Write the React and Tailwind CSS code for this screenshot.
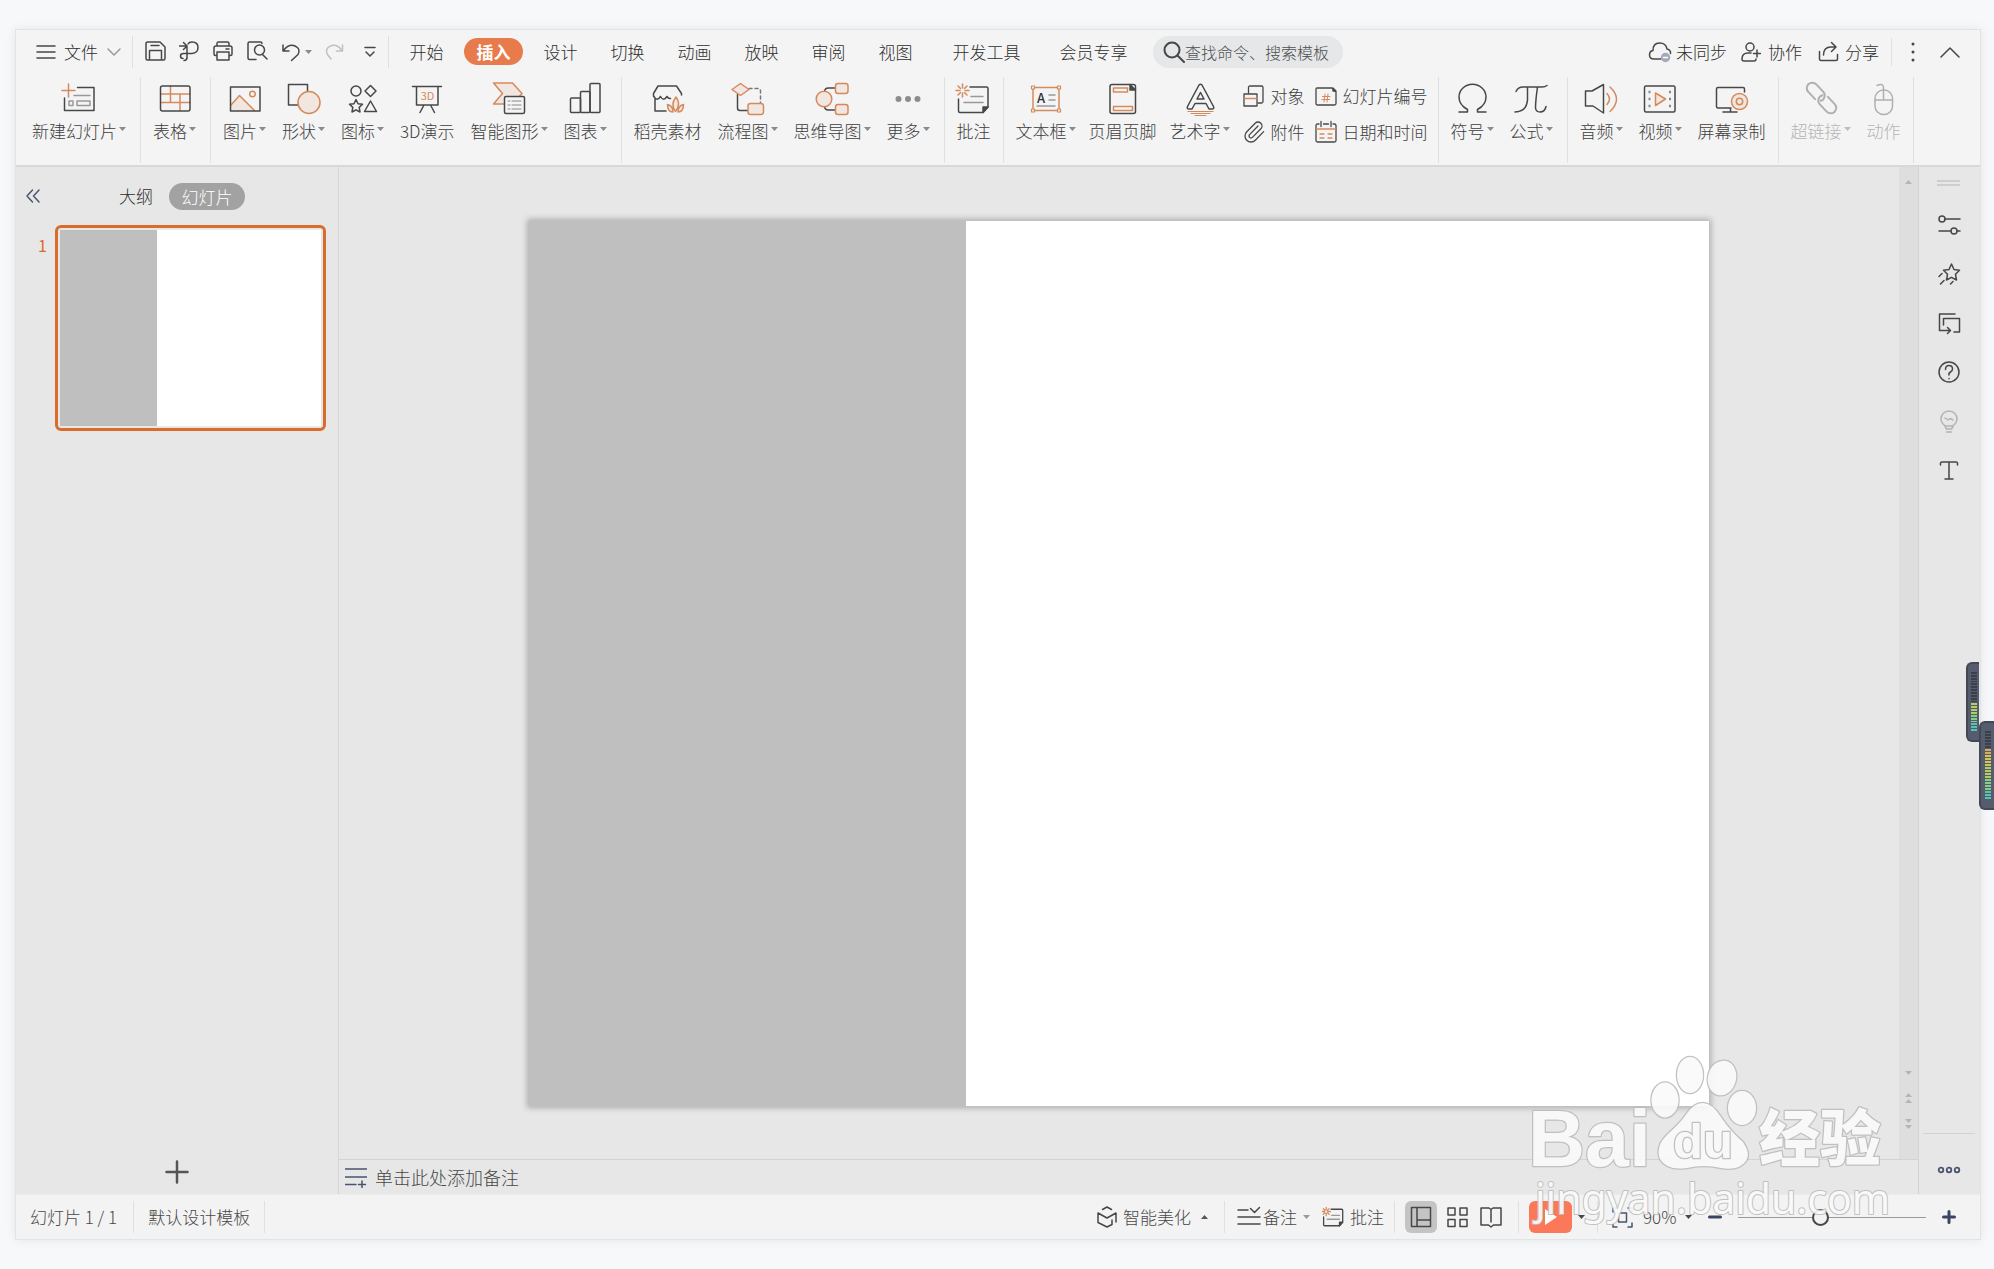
import React, { useState } from 'react';

const INK = '#474747';
const ORANGE = '#d58a5c';
const TINT = '#f1e6e0';

const icons = {
  newSlide: (
    <>
      <path d="M15.500 6.500H32V29.500H2.500V17" />
      <path d="M6.500 3v13M0 9.500h13" stroke={ORANGE} />
      <path d="M12 14.500h16" stroke="#999" />
      <path d="M7 20h4v4.500H7zM15 20h13v4.500H15z" stroke="#999" />
    </>
  ),
  table: (
    <>
      <path d="M3 13h29M3 21.500h29M12.500 5v16.500M22 13v16.500" stroke={ORANGE} />
      <rect x="2.500" y="5" width="29.500" height="25" rx="2" />
    </>
  ),
  picture: (
    <>
      <path d="M3 24L11.500 14.500L26.500 29.500H3z" fill={TINT} stroke="none" />
      <path d="M3 24L11.500 14.500L26.500 29.500" stroke={ORANGE} />
      <circle cx="24.500" cy="13" r="2.800" stroke={ORANGE} />
      <rect x="2.500" y="6" width="29.500" height="24" />
    </>
  ),
  shapes: (
    <>
      <rect x="1.500" y="3.500" width="19" height="20.500" />
      <circle cx="22" cy="21.500" r="11" fill={TINT} stroke={ORANGE} />
    </>
  ),
  iconSet: (
    <>
      <circle cx="10" cy="10" r="5" />
      <path d="M24.500 4.500L30 10l-5.500 5.500L19 10z" />
      <path d="M10 18.500l2 4.200 4.500.6-3.300 3.100.8 4.600-4-2.200-4 2.200.8-4.600-3.300-3.100 4.500-.6z" />
      <path d="M24.500 20L30.500 30.500h-12z" />
    </>
  ),
  show3d: (
    <>
      <path d="M2.500 5.500h29M6.500 5.500V24h21.500V5.500M14 24l-4 7.500M20.500 24l4 7.500" />
      <text x="17.500" y="19" textAnchor="middle" fontSize="11" fontWeight="400" fill={ORANGE} stroke="none">3D</text>
    </>
  ),
  smartArt: (
    <>
      <path d="M1.500 2H20.500L30 12.500L20.500 23H1.500L10.500 12.500z" fill={TINT} stroke={ORANGE} />
      <rect x="12.500" y="15.500" width="20" height="17" rx="1.500" fill="#f4f4f4" />
      <path d="M16 20h2M20 20h9M16 24h2M20 24h9M16 28h2M20 28h9" stroke="#888" strokeWidth="1" />
    </>
  ),
  chart: (
    <>
      <rect x="2.500" y="17" width="10" height="14.500" rx="1" />
      <rect x="12.500" y="10.500" width="9.500" height="21" rx="1" />
      <rect x="22" y="2.500" width="10" height="29" rx="1" />
    </>
  ),
  store: (
    <>
      <path d="M30.500 14V12.500L25.500 5H7L2.500 12.500V15Q6 21 9.500 15.500Q12.500 21 16 15.500Q17.500 18 19.500 17.500M4 18V30h11" />
      <path d="M24.500 30.500c-4-5-3-10 .5-14.500c3.500 4.500 3.500 9.500-.5 14.500zM22 31c-4 0-5.500-3-5.500-7.500c4 1 5.500 3.500 5.500 7.500zM27 31c4 0 5.500-3 5.500-7.500c-4 1-5.500 3.500-5.500 7.500z" stroke={ORANGE} fill={TINT} />
    </>
  ),
  flow: (
    <>
      <path d="M6.500 13.500V27q0 2.500 2.500 2.500h8" />
      <path d="M18 7.500h9q2.500 0 2.500 2.500v12" strokeDasharray="3 3" stroke="#777" />
      <path d="M9.500 2.500l8.500 6-8.500 6-8.500-6z" fill={TINT} stroke={ORANGE} />
      <rect x="17" y="22.500" width="15.500" height="11" rx="2.500" fill={TINT} stroke={ORANGE} />
    </>
  ),
  mind: (
    <>
      <path d="M9.500 11q0-4 4-4H21M9.500 25q0 4 4 4H21" />
      <circle cx="9" cy="18" r="7.800" fill={TINT} stroke={ORANGE} />
      <rect x="20.500" y="2.500" width="12.500" height="10" rx="2.500" fill={TINT} stroke={ORANGE} />
      <rect x="20.500" y="23.500" width="12.500" height="10" rx="2.500" fill={TINT} stroke={ORANGE} />
    </>
  ),
  more: (
    <g fill="#8c8c8c" stroke="none">
      <circle cx="7.500" cy="18" r="3" />
      <circle cx="17" cy="18" r="3" />
      <circle cx="26.500" cy="18" r="3" />
    </g>
  ),
  comment: (
    <>
      <path d="M13 6H29.500q1.500 0 1.500 1.500V26l-5 5.500H3q-1.500 0-1.500-1.500V18" />
      <path d="M31 26h-5v5.500z" fill={INK} />
      <path d="M14 15.500h12M7 21.500h19" stroke="#999" />
      <path d="M5.500 3v4M5.500 12v4M-1 9.500h4M8 9.500h4M1 5l2.500 2.500M7.500 11.500L10 14M10 5L7.500 7.500M3.500 11.500L1 14" stroke={ORANGE} />
    </>
  ),
  textBox: (
    <>
      <rect x="4" y="6.500" width="26" height="23" stroke={ORANGE} />
      <path d="M2.500 5h3v3h-3zM28.500 5h3v3h-3zM2.500 28h3v3h-3zM28.500 28h3v3h-3z" fill="#f4f4f4" stroke={ORANGE} strokeWidth="1.200" />
      <text x="12" y="21.500" textAnchor="middle" fontSize="13" fontWeight="500" fill="#333" stroke="none">A</text>
      <path d="M20 14h6M20 19h6M8 25h18" stroke="#999" />
    </>
  ),
  headerFooter: (
    <>
      <rect x="4" y="3.500" width="25.500" height="29" rx="2" />
      <path d="M24 3.500l5.500 5.500h-5.500z" fill={INK} />
      <path d="M7.500 7h14v4h-14zM7.500 25.500h19v4h-19z" stroke={ORANGE} />
    </>
  ),
  wordArt: (
    <>
      <path d="M16 4q1.500-1.500 3 0L30.500 25.500q1 2.500-1.500 2.500h-3l-3-5.500H12L9 28H6q-2.500 0-1.500-2.500z" />
      <path d="M17.500 11.500l-3.500 6.500h7z" />
      <path d="M5 30.500h25M8 32.500h19M12 34.500h11" stroke={ORANGE} strokeWidth="1.200" />
    </>
  ),
  omega: <path d="M4 31H12.500V28.500C7 25.500 4 21.500 4 16A13.500 12.800 0 0 1 31 16C31 21.500 28 25.500 22.500 28.500V31H31" />,
  pi: <path d="M2 10.500Q4 6 9 6H28Q31 6 33 4.500M13.500 6V19Q12.500 31 1 31M23.500 6Q21.500 20 21.500 27Q22 31 26 31Q31 31 32 25.500" />,
  audio: (
    <>
      <path d="M1.500 10H8L19.500 3.500V32L9 25H1.500z" />
      <path d="M23 12.500q5 5.500 0 11M26 6q13 12 0 24.500" stroke={ORANGE} />
    </>
  ),
  video: (
    <>
      <rect x="1.500" y="5" width="30.500" height="26" rx="1.500" />
      <path d="M5.500 11h2M5.500 18h2M5.500 25h2M26 11h2M26 18h2M26 25h2" strokeLinecap="butt" strokeWidth="2.500" stroke="#888" />
      <path d="M12.500 12l10 6-10 6.500z" fill={TINT} stroke={ORANGE} />
    </>
  ),
  record: (
    <>
      <path d="M16 27H3q-1.500 0-1.500-1.500V8q0-1.500 1.500-1.500H28q1.500 0 1.500 1.500v3M15.500 27v4M8 31h14" />
      <circle cx="24.500" cy="20.500" r="8" fill={TINT} stroke={ORANGE} />
      <circle cx="24.500" cy="20.500" r="3.200" stroke={ORANGE} />
    </>
  ),
  link: (
    <g transform="rotate(47 17.500 17)" stroke="#b0b0b0" strokeWidth="2">
      <path d="M14 22.500H4a5.500 5.500 0 0 1 0-11H14a5.500 5.500 0 0 1 5 8" />
      <path d="M21 11.500H31a5.500 5.500 0 0 1 0 11H21a5.500 5.500 0 0 1-5-8" />
    </g>
  ),
  mouse: (
    <g stroke="#b0b0b0">
      <rect x="8" y="9" width="17.500" height="24.500" rx="8.500" />
      <path d="M8 19h17.500M16.500 19V7q0-4-3-3.500T10 4.500" />
    </g>
  ),
};

const groups = [
  { items: [{ icon: 'newSlide', label: '新建幻灯片', menu: true }] },
  { items: [{ icon: 'table', label: '表格', menu: true }] },
  {
    items: [
      { icon: 'picture', label: '图片', menu: true },
      { icon: 'shapes', label: '形状', menu: true },
      { icon: 'iconSet', label: '图标', menu: true },
      { icon: 'show3d', label: '3D演示' },
      { icon: 'smartArt', label: '智能图形', menu: true },
      { icon: 'chart', label: '图表', menu: true },
    ],
  },
  {
    items: [
      { icon: 'store', label: '稻壳素材' },
      { icon: 'flow', label: '流程图', menu: true },
      { icon: 'mind', label: '思维导图', menu: true },
      { icon: 'more', label: '更多', menu: true },
    ],
  },
  { items: [{ icon: 'comment', label: '批注' }] },
  {
    items: [
      { icon: 'textBox', label: '文本框', menu: true },
      { icon: 'headerFooter', label: '页眉页脚' },
      { icon: 'wordArt', label: '艺术字', menu: true },
    ],
    small: true,
  },
  {
    items: [
      { icon: 'omega', label: '符号', menu: true },
      { icon: 'pi', label: '公式', menu: true },
    ],
  },
  {
    items: [
      { icon: 'audio', label: '音频', menu: true },
      { icon: 'video', label: '视频', menu: true },
      { icon: 'record', label: '屏幕录制' },
    ],
  },
  {
    items: [
      { icon: 'link', label: '超链接', menu: true, disabled: true },
      { icon: 'mouse', label: '动作', disabled: true },
    ],
  },
];

const smallTools = [
  {
    label: '对象',
    art: (
      <>
        <path d="M5.500 8V2.500Q5.500 1 7 1H18.500Q20 1 20 2.500V16.500Q20 18 18.500 18H15" />
        <rect x="1" y="9" width="13" height="12" />
        <path d="M1 13.500h13" stroke={ORANGE} />
      </>
    ),
  },
  {
    label: '幻灯片编号',
    art: (
      <>
        <path d="M2 3H17l4 4V18.500Q21 20 19.500 20H2.500Q1 20 1 18.500V4Q1 3 2 3z" />
        <path d="M18 3l3 3h-3z" fill={INK} />
        <path d="M10 9l-1 8M13 9l-1 8M7.500 11.500h7.500M7 14.500h7.500" stroke={ORANGE} strokeWidth="1" />
      </>
    ),
  },
  {
    label: '附件',
    art: (
      <path
        transform="translate(-1 -1)"
        d="m16 6-8.414 8.586a2 2 0 0 0 2.829 2.829l8.414-8.586a4 4 0 1 0-5.657-5.657l-8.379 8.551a6 6 0 1 0 8.485 8.485l8.379-8.551"
      />
    ),
  },
  {
    label: '日期和时间',
    art: (
      <>
        <path d="M4 3H2.500Q1 3 1 4.500V19.500Q1 21 2.500 21H19.500Q21 21 21 19.500V4.500Q21 3 19.500 3H18M8.500 3h5M6 .5v5M16 .5v5" />
        <path d="M1.500 8h19M5 13h4M13 13h4M5 17h4M13 17h4" stroke={ORANGE} />
      </>
    ),
  },
];

const quickTools = [
  { label: '保存', art: <path d="M3 1H15l5 5V17.500Q20 19 18.500 19H2.500Q1 19 1 17.500V2.500Q1 1 3 1zM6 4.500h8M4.500 19V9.500H16.500V19" /> },
  { label: '输出', art: <path d="M0 5h7M4.500 1.500L8 5 4.500 8.500M9 3q1-2 4-2 6 0 6 5.500T13 12.500H4.500Q1.500 12.500 1.500 15T4 17.500M8 5V16.500Q8 19.500 5 19.500" /> },
  { label: '打印', art: <path d="M4 5V2.500Q4 1 5.500 1H14.500Q16 1 16 2.500V5M4 14.500H2.500Q1 14.500 1 13V7Q1 5 3 5H17Q19 5 19 7V13Q19 14.500 17.500 14.500H16M4 11H16V19H4zM13 8h3" /> },
  { label: '打印预览', art: <path d="M9 18.500H2.500Q1 18.500 1 17V2.500Q1 1 2.500 1H13.500Q15 1 15 2.500M15.500 13.500L20 18" />, lens: true },
];

const tabs = ['开始', '插入', '设计', '切换', '动画', '放映', '审阅', '视图'];

const Svg = ({ className, size = '34', view, width = '1.5', children }) => (
  <svg
    className={className}
    viewBox={view || `0 0 ${size} ${size}`}
    fill="none"
    stroke={INK}
    strokeWidth={width}
    strokeLinecap="round"
    strokeLinejoin="round"
    aria-hidden="true"
  >
    {children}
  </svg>
);

const Arrow = ({ className = 'text-[#8a8a8a]', up }) => (
  <svg className={`h-1 w-[7px] shrink-0 ${className}`} viewBox="0 0 7 4" aria-hidden="true">
    <path d={up ? 'M0 4L3.500 0L7 4z' : 'M0 0H7L3.500 4z'} fill="currentColor" />
  </svg>
);

const Divider = ({ className = 'h-8' }) => <div className={`w-px shrink-0 bg-[#e0e0e0] ${className}`} />;

const RibbonButton = ({ item }) => (
  <button
    disabled={item.disabled}
    className={`flex shrink-0 flex-col items-center gap-1.5 ${item.disabled ? 'text-[#b5b5b5]' : ''}`}
  >
    <Svg className="size-[34px] overflow-visible">{icons[item.icon]}</Svg>
    <span className="flex items-center gap-0.5 leading-5">
      {item.label}
      {item.menu && <Arrow className={item.disabled ? 'mb-1 text-[#bdbdbd]' : 'mb-1 text-[#8a8a8a]'} />}
    </span>
  </button>
);

const TitleRow = () => {
  const [active, setActive] = useState('插入');

  return (
    <div className="flex h-[43px] items-center text-[#2e2e2e]">
      <button className="flex items-center gap-2 pl-5">
        <Svg className="size-5" size="20"><path d="M1 4h18M1 10h18M1 16h18" /></Svg>
        文件
        <Svg className="h-4 w-4" size="16"><path d="M2 5l6 6 6-6" stroke="#999" /></Svg>
      </button>
      <Divider className="ml-2.5 h-8" />
      <div className="ml-3 flex items-center gap-[13px]">
        {quickTools.map((tool) => (
          <button key={tool.label} aria-label={tool.label}>
            <Svg className="size-[21px]" size="21">
              {tool.art}
              {tool.lens && <circle cx="12.500" cy="9" r="5" />}
            </Svg>
          </button>
        ))}
        <button aria-label="撤销" className="flex items-center gap-1">
          <Svg className="size-5" size="20"><path d="M2 3v6h6M2.500 8.500Q8 1.500 14 4t3 8.500L10.500 18.500" /></Svg>
          <Arrow />
        </button>
        <button aria-label="恢复">
          <Svg className="size-5" size="20"><path d="M17.500 3v6h-6M17 8.500Q11.500 1.500 5.500 4t-3 8.500L6 17" stroke="#c0c0c0" /></Svg>
        </button>
        <button aria-label="自定义快速访问工具栏" className="ml-1.5">
          <Svg className="h-3 w-3" size="12"><path d="M1 1.500h10M2 6l4 4 4-4" /></Svg>
        </button>
      </div>
      <Divider className="ml-3 h-8" />
      <nav className="ml-1 flex items-center">
        {tabs.map((tab) => (
          <button
            key={tab}
            onClick={() => setActive(tab)}
            className={
              tab === active
                ? 'mx-1 h-[27px] w-[59px] rounded-full bg-[#e87b4b] leading-[27px] font-bold text-white'
                : 'w-[67px] whitespace-nowrap'
            }
          >
            {tab}
          </button>
        ))}
        <button className="ml-1 w-[107px] whitespace-nowrap">开发工具</button>
        <button className="w-[107px] whitespace-nowrap">会员专享</button>
      </nav>
      <label className="ml-1.5 flex h-8 w-[190px] items-center rounded-full bg-[#e6e7e8] pl-2.5">
        <Svg className="size-[22px] shrink-0" size="22">
          <circle cx="9" cy="9" r="7.500" strokeWidth="2" />
          <path d="M14.500 14.500L21 21" strokeWidth="2" />
        </Svg>
        <input
          aria-label="查找命令、搜索模板"
          placeholder="查找命令、搜索模板"
          className="w-full min-w-0 bg-transparent text-base outline-none placeholder:text-[#4f4f4f]"
        />
      </label>
      <div className="ml-auto flex items-center pr-5">
        <button className="flex items-center gap-1">
          <Svg className="h-[22px] w-6" view="0 0 24 22">
            <path d="M13 18H6Q1.500 18 1.500 14T5 9.500Q5 2 11.500 2T19 8Q23 9 22.500 12.500" />
            <circle cx="17.500" cy="16.500" r="4.700" fill="#a3aabb" stroke="none" />
            <path d="M15.500 16.500h4" stroke="#fff" />
          </Svg>
          未同步
        </button>
        <button className="ml-3.5 flex items-center gap-[7px]">
          <Svg className="size-5" size="20">
            <circle cx="9" cy="5" r="4" />
            <path d="M10 11H7Q1 11 1 17Q1 19 3 19H13Q15 19 15 17M12.500 11.500h7M16 8v7" />
          </Svg>
          协作
        </button>
        <button className="ml-4 flex items-center gap-1.5">
          <Svg className="size-[21px]" size="21">
            <path d="M1.500 10.500V18Q1.500 19.500 3 19.500H18Q19.500 19.500 19.500 18V13.500M5.500 14Q5.500 6 13 6H17M13.500 1.500L18 6l-4.500 4.500" />
          </Svg>
          分享
        </button>
        <Divider className="ml-3 h-7" />
        <button aria-label="更多选项" className="ml-[18px]">
          <Svg className="h-[22px] w-1.5" view="0 0 6 22">
            <path d="M3 3v.1M3 11v.1M3 19v.1" strokeWidth="3" />
          </Svg>
        </button>
        <button aria-label="收起功能区" className="ml-6">
          <Svg className="h-3 w-5" view="0 0 20 12"><path d="M1 11l9-9 9 9" /></Svg>
        </button>
      </div>
    </div>
  );
};

const Ribbon = () => (
  <div className="flex h-[92px] pt-1 pb-0.5 text-[#3d3d3d]">
    {groups.map((group, index) => (
      <React.Fragment key={index}>
        <div
          className={`flex items-start pt-1 pl-3 ${index === 0 ? 'ml-1' : ''} ${group.small ? 'gap-[13px]' : 'gap-4'} ${group.items.at(-1).menu ? 'pr-3.5' : 'pr-3'}`}
        >
          {group.items.map((item) => (
            <RibbonButton key={item.label} item={item} />
          ))}
          {group.small && (
            <div className="-mr-1 grid grid-cols-[auto_auto] gap-x-2.5 gap-y-3.5 pt-1">
              {smallTools.map((tool) => (
                <button key={tool.label} className="flex items-center gap-1.5 leading-5 whitespace-nowrap">
                  <Svg className="size-[22px] overflow-visible" size="22" width="1.3">{tool.art}</Svg>
                  {tool.label}
                </button>
              ))}
            </div>
          )}
        </div>
        <Divider className="h-full" />
      </React.Fragment>
    ))}
  </div>
);

const SlidePanel = () => (
  <aside className="flex w-[323px] shrink-0 flex-col border-r border-[#d6d6d6]">
    <div className="flex h-[58px] items-center pl-2">
      <button aria-label="收起面板">
        <Svg className="h-4 w-[18px]" view="0 0 18 16"><path d="M8.500 2L3 8l5.500 6M15 2L9.500 8l5.500 6" stroke="#4a5470" /></Svg>
      </button>
      <button className="ml-[77px] text-[#2e2e2e]">大纲</button>
      <button className="ml-4 h-[27px] w-[76px] rounded-full bg-[#a2a2a2] leading-[27px] text-white">幻灯片</button>
    </div>
    <div className="flex pr-3">
      <span className="w-[39px] pt-2 pr-2 text-right text-base font-normal text-[#de6a1f]">1</span>
      <button aria-label="幻灯片 1" className="flex aspect-[271/206] flex-1 rounded-md border-3 border-[#d96c2d] p-0.5">
        <span className="h-full w-[37%] bg-[#bfbfbf]" />
        <span className="h-full flex-1 bg-white" />
      </button>
    </div>
    <button aria-label="新建幻灯片" className="mx-auto mt-auto mb-2.5">
      <Svg className="size-6" size="24"><path d="M12 1.500v21M1.500 12h21" strokeWidth="2.500" stroke="#555" /></Svg>
    </button>
  </aside>
);

const ScrollBar = () => (
  <div className="flex w-5 shrink-0 flex-col items-center border-r border-[#d3d3d3] bg-[#dedede]">
    <Arrow up className="mt-[13px] text-[#b5b5b5]" />
    <Arrow className="mt-auto text-[#b5b5b5]" />
    <div className="mt-[18px] flex flex-col gap-0.5">
      <Arrow up className="text-[#b5b5b5]" />
      <Arrow up className="text-[#b5b5b5]" />
    </div>
    <div className="mt-4 mb-[30px] flex flex-col gap-0.5">
      <Arrow className="text-[#b5b5b5]" />
      <Arrow className="text-[#b5b5b5]" />
    </div>
  </div>
);

const sideTools = [
  { label: '属性', art: <><circle cx="4" cy="5" r="3" /><path d="M7 5h15M1 17h12M19 17h3" /><circle cx="16" cy="17" r="3" /></> },
  { label: '动画', art: <><path d="M13.500 1l2.500 5.500 5.500.8-4 4 1 5.700-5-2.700-5 2.700 1-5.700-4-4 5.500-.8z" /><path d="M4 10.500L1 13.500M6 17.500L2.500 21M15 18.500L12.500 21" /></> },
  { label: '切换', art: <path d="M17 2H1.500V18.500H12M9.500 15.500l3 3-3 3M5.500 13V6.500H21.500V20H16" /> },
  { label: '帮助', art: <><circle cx="11" cy="11" r="10" /><path d="M7.500 8.500q0-4 3.500-4t3.500 3.500q0 2-2 3t-1.500 3M11 17.500v.2" /></> },
  { label: '提示', art: <path stroke="#b3b3b3" d="M7.500 16Q3 13 3 9a8 8 0 0 1 16 0Q19 13 14.500 16zM7 8l3 2 2-1.500L15 10M7 16.500l1.500 2.500h5l1.500-2.500M8.500 22h5" /> },
  { label: '文本', art: <path d="M2.500 6V4Q2.500 3 4 3H18Q19.500 3 19.500 4V6M11 3V20M7 20h8" /> },
];

const SideBar = () => (
  <aside className="flex w-[61px] shrink-0 flex-col items-center pr-0.5">
    <Svg className="mt-3 h-2 w-[23px]" view="0 0 23 8"><path d="M0 2h23M0 6h23" stroke="#c6c6c6" /></Svg>
    <div className="mt-[27px] flex flex-col gap-[27px]">
      {sideTools.map((tool) => (
        <button key={tool.label} aria-label={tool.label}>
          <Svg className="size-[22px] overflow-visible" size="22">{tool.art}</Svg>
        </button>
      ))}
    </div>
    <div className="mt-auto h-px w-[52px] bg-[#d3d3d3]" />
    <button aria-label="更多窗格" className="mt-8 mb-5">
      <Svg className="h-2 w-6" view="0 0 24 8">
        <g stroke="#4a5470" strokeWidth="1.800">
          <circle cx="4" cy="4" r="2.300" />
          <circle cx="12" cy="4" r="2.300" />
          <circle cx="20" cy="4" r="2.300" />
        </g>
      </Svg>
    </button>
  </aside>
);

const StatusBar = () => {
  const [zoom, setZoom] = useState(43);

  return (
    <footer className="flex h-[45px] shrink-0 items-center border-t border-[#ececec] bg-[#f3f3f3] whitespace-nowrap text-[#484848]">
      <span className="pl-3.5">幻灯片 1 / 1</span>
      <Divider className="ml-4 h-8" />
      <span className="pl-3.5">默认设计模板</span>
      <Divider className="ml-3.5 h-8" />

      <div className="ml-auto flex items-center pr-6">
        <button className="flex items-center gap-1.5">
          <Svg className="h-[22px] w-5" view="0 0 20 22">
            <path d="M5.500 3.500L10 1l4.500 2.500M1 7l9 5 9-5v9M1 7v9.500l9 4.500 5-2.500V14" />
          </Svg>
          智能美化
          <Arrow up className="ml-1 text-[#555]" />
        </button>
        <Divider className="ml-4 h-8" />
        <button className="ml-3 flex items-center">
          <Svg className="h-[22px] w-6" view="0 0 24 22"><path d="M1 4h10M1 11h22M1 18h22M13.500 2.500l4 4 5-5" /></Svg>
          <span className="ml-0.5">备注</span>
          <Arrow className="ml-1.5 text-[#999]" />
        </button>
        <button className="ml-3 flex items-center gap-1.5">
          <Svg className="size-[22px]" view="-1 1 34 34" width="2">{icons.comment}</Svg>
          批注
        </button>
        <Divider className="mx-2.5 h-8" />
        <button aria-label="普通视图" className="grid size-8 place-items-center rounded-md bg-[#c4c4c4]">
          <Svg className="size-[22px]" size="22"><path d="M1.500 1.500h19v19h-19zM7 1.500v19M7 14h13.500" /></Svg>
        </button>
        <button aria-label="幻灯片浏览" className="ml-2.5">
          <Svg className="size-[21px]" size="21"><path d="M1 1h7v7H1zM13 1h7v7h-7zM1 12.500h7v7H1zM13 12.500h7v7h-7z" /></Svg>
        </button>
        <button aria-label="阅读视图" className="ml-3">
          <Svg className="size-[22px]" size="22"><path d="M11 3.500L9 2H1V19H8.500L11 21l2.500-2H21V2H13zV16" /></Svg>
        </button>
        <Divider className="ml-4 h-8" />
        <button aria-label="放映" className="ml-2.5 grid h-8 w-[43px] place-items-center rounded-md bg-[#fb7858]">
          <svg className="h-4 w-3" viewBox="0 0 12 16" aria-hidden="true"><path d="M0 0l12 8L0 16z" fill="#fff" /></svg>
        </button>
        <Arrow className="ml-1.5" />
        <Divider className="ml-3 h-8" />
        <button aria-label="适应窗口" className="ml-3.5">
          <Svg className="size-[21px]" size="21"><path d="M1 5V1H5M16 1h4V5M20 16v4H16M5 20H1V16M6.500 6h8v9h-8z" stroke="#4a5470" /></Svg>
        </button>
        <select aria-label="缩放比例" className="ml-2.5 w-[38px] appearance-none bg-transparent outline-none">
          <option>90%</option>
        </select>
        <Arrow className="ml-1" />
        <button aria-label="缩小" className="ml-4">
          <Svg className="size-3.5" size="14"><path d="M1.500 7h11" stroke="#3a4564" strokeWidth="3" /></Svg>
        </button>
        <input
          type="range"
          aria-label="缩放"
          value={zoom}
          onChange={(e) => setZoom(e.target.value)}
          className="ml-4 h-[18px] w-[188px] appearance-none bg-transparent [&::-webkit-slider-runnable-track]:h-px [&::-webkit-slider-runnable-track]:bg-[#999] [&::-webkit-slider-thumb]:-mt-2 [&::-webkit-slider-thumb]:size-[17px] [&::-webkit-slider-thumb]:appearance-none [&::-webkit-slider-thumb]:rounded-full [&::-webkit-slider-thumb]:border-2 [&::-webkit-slider-thumb]:border-[#474747] [&::-webkit-slider-thumb]:bg-[#f3f3f3]"
        />
        <button aria-label="放大" className="ml-4">
          <Svg className="size-3.5" size="14"><path d="M7 1.500v11M1.500 7h11" stroke="#3a4564" strokeWidth="3" /></Svg>
        </button>
      </div>
    </footer>
  );
};

const meterColor = (ratio) => {
  if (ratio > 0.9) return '#dcab55';
  if (ratio > 0.7) return '#d3c750';
  if (ratio > 0.45) return '#b4cc62';
  if (ratio > 0.22) return '#84cf86';
  return '#52c4b2';
};

const Meter = ({ total, lit, top = 1, className }) => (
  <div className={`absolute flex flex-col rounded-l-md border-2 border-r-0 border-[#444854] bg-[#555c6d] ${className}`}>
    {Array.from({ length: total }, (_, i) => {
      const level = total - i;
      return (
        <div
          key={i}
          className="mb-px h-0.5 w-1.5"
          style={{ backgroundColor: level <= lit ? meterColor((level / lit) * top) : '#3b3f4b' }}
        />
      );
    })}
  </div>
);

const Watermark = () => (
  <svg
    className="pointer-events-none absolute right-[79px] bottom-[42px] h-[180px] w-[400px]"
    viewBox="0 0 400 180"
    fill="#fafafa"
    stroke="#bdbdbd"
    strokeWidth="2.500"
    paintOrder="stroke"
    strokeLinejoin="round"
    opacity="0.92"
    aria-hidden="true"
  >
    <ellipse cx="150" cy="53" rx="13.500" ry="17.500" />
    <ellipse cx="175" cy="28" rx="13" ry="18" />
    <ellipse cx="207" cy="31" rx="14" ry="17.500" transform="rotate(14 207 31)" />
    <ellipse cx="227" cy="61" rx="14" ry="17" />
    <path d="M188 56Q197 56 206 70T228 95Q236 107 231 114Q224 124 206 121Q189 117 172 121Q152 124 145 112Q140 99 153 87T170 69Q178 56 188 56z" />
    <text x="13" y="119" fontFamily="Liberation Sans, sans-serif" fontWeight="700" fontSize="79">Bai</text>
    <text x="158" y="111" fontFamily="Liberation Sans, sans-serif" fontWeight="700" fontSize="49">du</text>
    <text x="244" y="114" fontFamily="Noto Sans CJK SC, sans-serif" fontWeight="900" fontSize="61">经验</text>
    <text x="20" y="167" fontFamily="Noto Sans, sans-serif" fontWeight="400" fontSize="41" strokeWidth="2">jingyan.baidu.com</text>
  </svg>
);

export default function App() {
  return (
    <div className="relative flex min-h-screen flex-col overflow-hidden bg-[#f7f8fa] py-[29px] pr-[13px] pl-[15px] font-['Noto_Sans_CJK_SC',sans-serif] text-[17px] font-light">
      <div className="flex flex-1 flex-col border border-[#e2e3e4] bg-[#e7e7e7] shadow-[0_0_10px_rgba(0,0,0,0.08)]">
        <header className="border-b-2 border-[#d8d8d8] bg-[#f4f4f4]">
          <TitleRow />
          <Ribbon />
        </header>

        <div className="flex flex-1">
          <SlidePanel />
          <main className="flex flex-1 flex-col">
            <div className="flex flex-1">
              <div className="flex flex-1 items-center justify-center">
                <div className="flex aspect-4/3 w-[1180px] max-w-full bg-white shadow-[0_0_6px_2px_rgba(0,0,0,0.25)]">
                  <div className="w-[37%] bg-[#bfbfbf]" />
                </div>
              </div>
              <ScrollBar />
            </div>
            <label className="flex h-[35px] items-center gap-2 border-t border-r border-[#d3d3d3] pl-1.5">
              <Svg className="size-[22px]" size="22">
                <path d="M0 3h22M0 11h22M0 18.500h11M17 15v7M13.500 18.500h7" stroke="#4a5470" />
              </Svg>
              <input
                aria-label="备注"
                placeholder="单击此处添加备注"
                className="flex-1 bg-transparent text-lg outline-none placeholder:text-[#484848]"
              />
            </label>
          </main>
          <SideBar />
        </div>

        <StatusBar />
      </div>

      <Meter total={21} lit={10} top={0.7} className="top-[662px] right-[15px] h-20 w-[13px] py-2 pl-[3px]" />
      <Meter total={23} lit={17} className="top-[721px] right-0 h-[89px] w-[15px] py-2 pl-1" />
      <Watermark />
    </div>
  );
}
